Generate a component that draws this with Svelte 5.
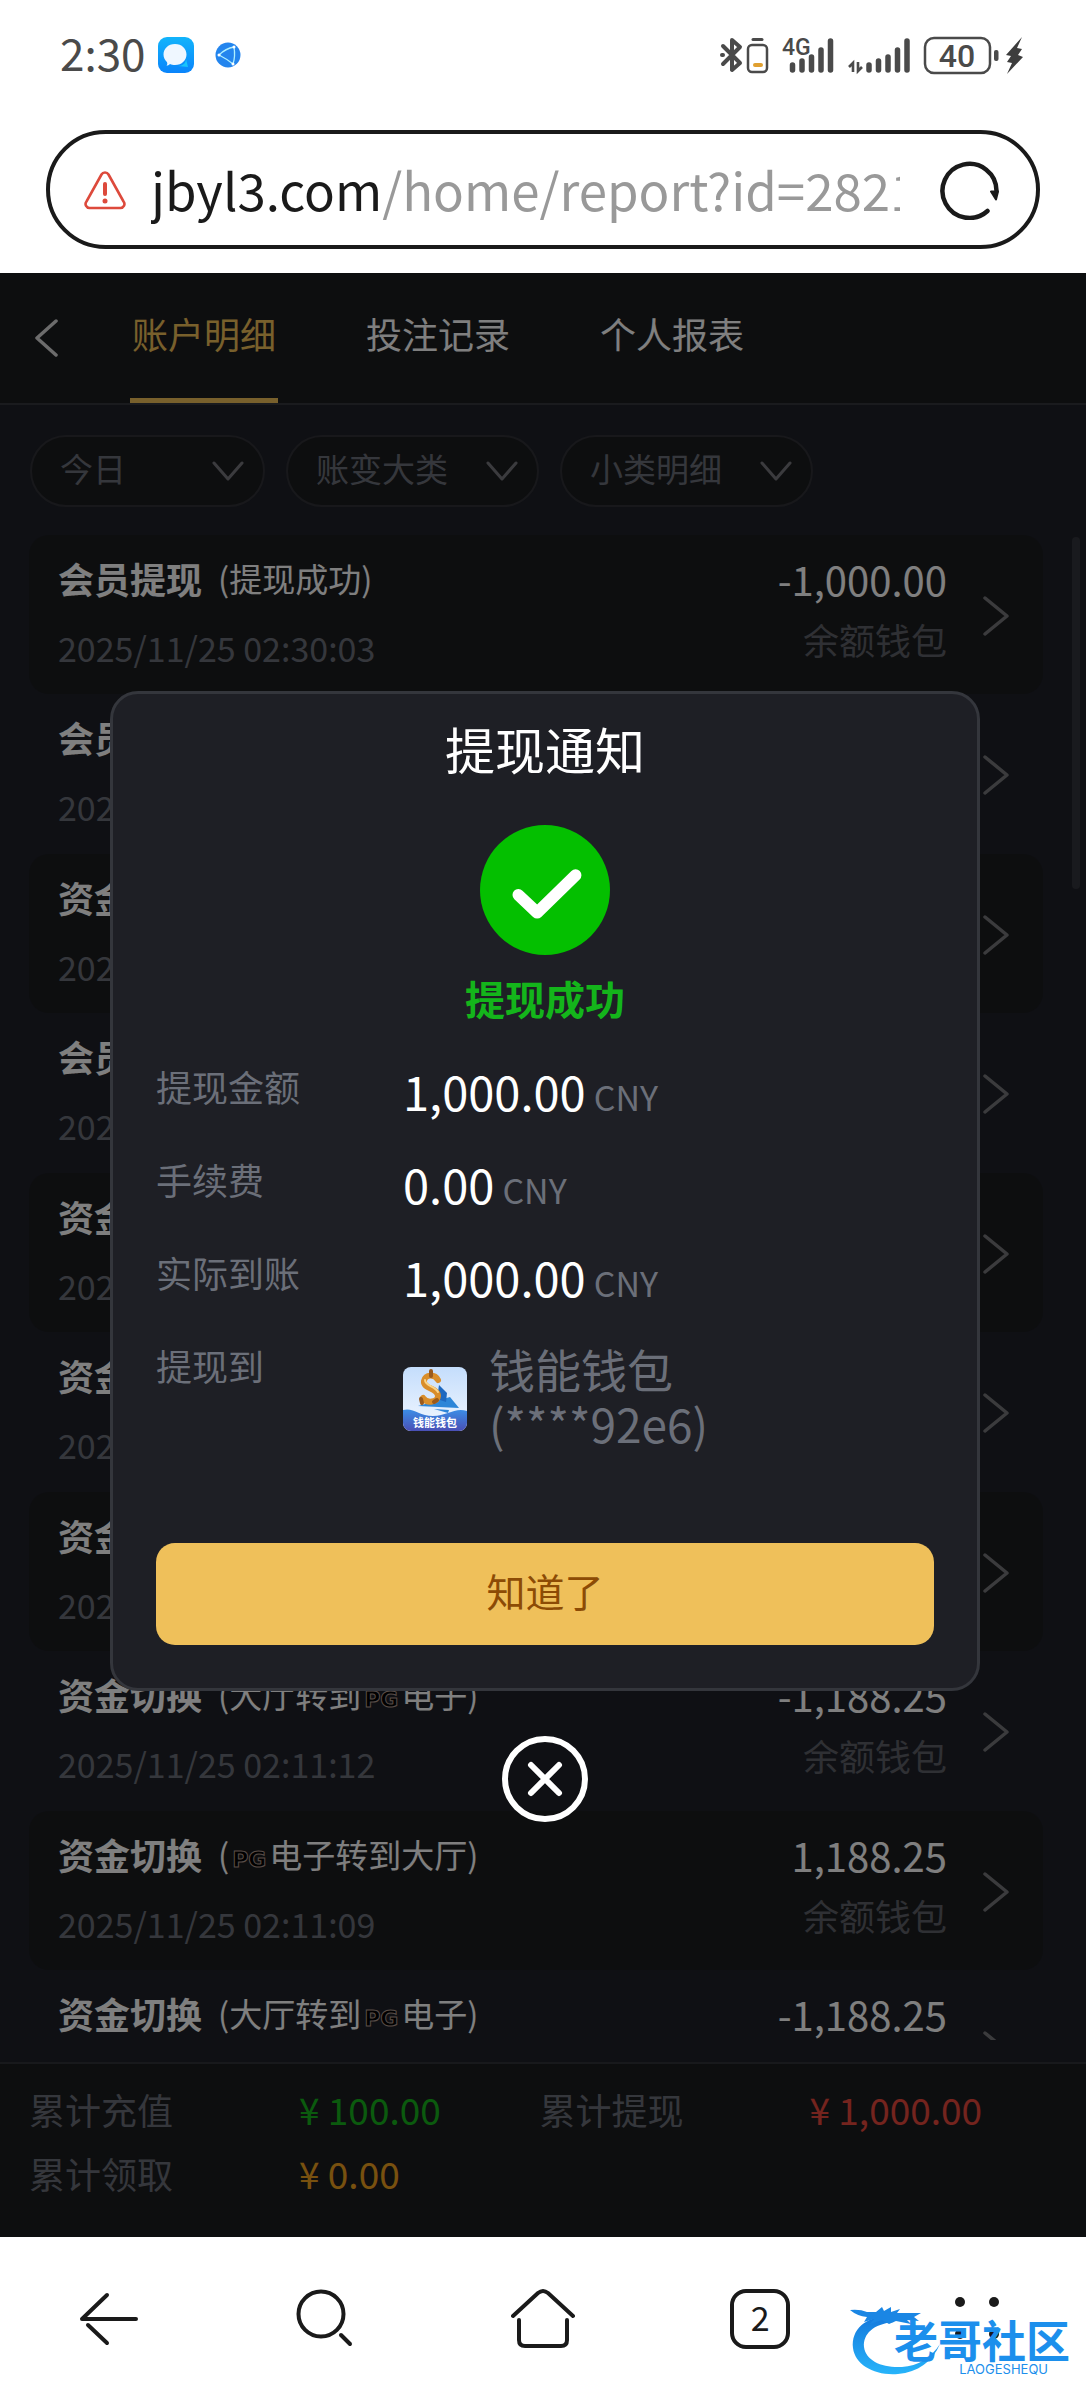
<script>
  const tabs = ['账户明细', '投注记录', '个人报表'];
  let activeTab = '账户明细';

  const filters = [
    { id: 'filter-date', label: '今日' },
    { id: 'filter-type', label: '账变大类' },
    { id: 'filter-sub', label: '小类明细' }
  ];

  // note parts: plain strings, 'PG' is drawn as the provider badge
  const toPg = ['(大厅转到', 'PG', '电子)'];
  const fromPg = ['(', 'PG', '电子转到大厅)'];

  const records = [
    { title: '会员提现', note: ['(提现成功)'], time: '2025/11/25 02:30:03', amount: '-1,000.00', wallet: '余额钱包' },
    { title: '会员提现', time: '2025/11/25' },
    { title: '资金切换', time: '2025/11/25' },
    { title: '会员提现', time: '2025/11/25' },
    { title: '资金切换', time: '2025/11/25' },
    { title: '资金切换', time: '2025/11/25' },
    { title: '资金切换', time: '2025/11/25' },
    { title: '资金切换', note: toPg, time: '2025/11/25 02:11:12', amount: '-1,188.25', wallet: '余额钱包' },
    { title: '资金切换', note: fromPg, time: '2025/11/25 02:11:09', amount: '1,188.25', wallet: '余额钱包' },
    { title: '资金切换', note: toPg, time: '2025/11/25', amount: '-1,188.25', wallet: '余额钱包' }
  ];

  const totals = [
    { label: '累计充值', value: '¥ 100.00', tone: 'green' },
    { label: '累计提现', value: '¥ 1,000.00', tone: 'red' },
    { label: '累计领取', value: '¥ 0.00', tone: 'gold' }
  ];

  const details = [
    { label: '提现金额', value: '1,000.00' },
    { label: '手续费', value: '0.00' },
    { label: '实际到账', value: '1,000.00' }
  ];

  let showNotice = true;

  function closeNotice() {
    showNotice = false;
  }
</script>

<div class="phone">
  <div class="status-bar">
    <div class="status-left">
      <span class="clock">2:30</span>
      <svg class="app-icon" width="36" height="36" viewBox="0 0 36 36">
        <defs>
          <linearGradient id="msg-bg" x1="0" y1="0" x2="0" y2="1">
            <stop offset="0" stop-color="#12b4fb" />
            <stop offset="1" stop-color="#0a84fb" />
          </linearGradient>
        </defs>
        <rect width="36" height="36" rx="9" fill="url(#msg-bg)" />
        <path d="M20 29c5 0 8-3 8-7l2 8z" fill="#19c5fb" />
        <path d="M17 7c7 0 11.500 5 11.500 10.500S24 28 17 28c-2 0-3.500-.3-5-1-.6.900-1.500 1.500-3.500 1.600 1-1.200 1-2.400.4-3.600C7 23 5.500 20.500 5.500 17.500 5.500 12 10 7 17 7z" fill="#eff7ff" />
      </svg>
      <svg class="globe" width="26" height="26" viewBox="0 0 26 26">
        <circle cx="13" cy="13" r="12.500" fill="#2385ee" />
        <path d="M4 13C8 9 13 6 19 5M4 13c4 2 9 5 14 9M19 5c1 6 1 11-1 17" fill="none" stroke="#aef0ff" stroke-width="1.300" />
        <circle cx="4" cy="13" r="1.500" fill="#fff" />
        <circle cx="19" cy="5" r="1.500" fill="#fff" />
        <circle cx="18" cy="22" r="1.500" fill="#fff" />
      </svg>
    </div>
    <svg class="status-right" width="304" height="56" viewBox="720 26 304 56">
      <g fill="none" stroke="#4a4a4a" stroke-width="4" stroke-linejoin="round" stroke-linecap="round">
        <path d="M723 45l17 17-8 7V39l8 7-17 17" />
        <path d="M722 54h1" />
        <rect x="748" y="44" width="19" height="27" rx="4" stroke-width="2.500" />
        <path d="M753 38.500h9" stroke-width="3" />
        <path d="M755 64h6" stroke="#e0a030" />
      </g>
      <text x="782" y="54" class="net-label">4G</text>
      <g stroke="#4a4a4a" stroke-width="5.500" stroke-linecap="round">
        <path d="M792.500 64v5M802 60v9M811.500 56v13M821 49v20M830.500 40v29" />
        <path d="M869 64v5M878.500 60v9M888 56v13M897.500 49v20M907 40v29" />
      </g>
      <path d="M853 71V62l-4 4M858 61v9l4-4" fill="none" stroke="#4a4a4a" stroke-width="2.600" />
      <rect x="925" y="37" width="65" height="35" rx="9" fill="none" stroke="#4a4a4a" stroke-width="2.500" />
      <text x="957" y="66" text-anchor="middle" class="battery-label">40</text>
      <rect x="994" y="49" width="4.500" height="11" rx="2" fill="#4a4a4a" />
      <path d="M1022 36l-16 18 5 1-4 6 5 1-5 11 16-17-5-2 4-6-5-1z" fill="#3d3d3d" />
    </svg>
  </div>

  <div class="address-row">
    <div class="address-bar">
      <svg class="warn" width="42" height="40" viewBox="0 0 42 40" fill="none" stroke="#dd4a3c">
        <path d="M17.500 4.500a4 4 0 0 1 7 0l15 27a4 4 0 0 1-3.500 6.500H6a4 4 0 0 1-3.500-6.500z" stroke-width="2.600" />
        <path d="M21 14v10" stroke-width="4" stroke-linecap="round" />
        <circle cx="21" cy="31" r="2.500" fill="#dd4a3c" stroke="none" />
      </svg>
      <div class="url">jbyl3.com<span>/home/report?id=2821</span></div>
      <button class="plain reload" aria-label="刷新">
        <svg width="60" height="60" viewBox="0 0 60 60" fill="none" stroke="#1a1a1a" stroke-width="4.500" stroke-linecap="round">
          <path d="M47.500 51A27 27 0 1 1 56.500 31" />
          <path d="M51 31.500h7l-2 8z" fill="#1a1a1a" stroke-width="2" stroke-linejoin="round" />
        </svg>
      </button>
    </div>
  </div>

  <main class="page">
    <header class="page-header">
      <button class="plain back" aria-label="返回">
        <svg width="24" height="38" viewBox="0 0 24 38" fill="none" stroke="#d8d8d8" stroke-width="3.500" stroke-linecap="round" stroke-linejoin="round">
          <path d="M21 2L2 19l19 17" />
        </svg>
      </button>
      <nav class="tabs">
        {#each tabs as tab}
          <button class="plain tab" class:active={tab === activeTab} on:click={() => (activeTab = tab)}>{tab}</button>
        {/each}
      </nav>
    </header>

    <div class="filters">
      {#each filters as filter, i}
        <div class="filter" class:short={i === 0}>
          <select id={filter.id} aria-label={filter.label}>
            <option>{filter.label}</option>
          </select>
          <svg width="32" height="22" viewBox="0 0 32 22" fill="none" stroke="#76777d" stroke-width="3" stroke-linecap="round" stroke-linejoin="round">
            <path d="M2 3l14 16L30 3" />
          </svg>
        </div>
      {/each}
    </div>

    <div class="list-area">
      <ul class="records">
        {#each records as record}
          <li class="record">
            <div class="record-main">
              <div class="record-title">
                <strong>{record.title}</strong>
                {#if record.note}
                  <span class="note">{#each record.note as part}{#if part === 'PG'}<b class="pg">PG</b>{:else}{part}{/if}{/each}</span>
                {/if}
              </div>
              <div class="time">{record.time}</div>
            </div>
            {#if record.amount}
              <div class="record-side">
                <div class="amount">{record.amount}</div>
                <div class="wallet">{record.wallet}</div>
              </div>
            {/if}
            <svg class="arrow" width="26" height="40" viewBox="0 0 26 40" fill="none" stroke="#76777a" stroke-width="3.500" stroke-linecap="round" stroke-linejoin="round">
              <path d="M2 2l22 18L2 38" />
            </svg>
          </li>
        {/each}
      </ul>
      <div class="scroll-thumb"></div>
    </div>

    <footer class="totals">
      {#each totals as total}
        <div class="total">
          <span class="total-label">{total.label}</span>
          <span class="total-value {total.tone}">{total.value}</span>
        </div>
      {/each}
    </footer>

    {#if showNotice}
      <div class="overlay">
        <div class="dialog" role="dialog" aria-labelledby="notice-title">
          <h2 id="notice-title">提现通知</h2>
          <svg class="check" width="130" height="130" viewBox="0 0 132 132">
            <circle cx="66" cy="66" r="66" fill="#04bf00" />
            <path d="M39 71l19 18 39-38" fill="none" stroke="#fff" stroke-width="12" stroke-linecap="round" stroke-linejoin="round" />
          </svg>
          <p class="result">提现成功</p>

          <dl class="details">
            {#each details as row}
              <dt>{row.label}</dt>
              <dd><span class="money">{row.value}</span> <span class="unit">CNY</span></dd>
            {/each}
            <dt>提现到</dt>
            <dd class="target">
              <svg width="64" height="64" viewBox="0 0 64 64">
                <defs>
                  <linearGradient id="wallet-bg" x1="0" y1="0" x2="0" y2="1">
                    <stop offset="0" stop-color="#c4ddfc" />
                    <stop offset="1" stop-color="#f3f8ff" />
                  </linearGradient>
                  <linearGradient id="wallet-wave" x1="0" y1="0" x2="0" y2="1">
                    <stop offset="0" stop-color="#3b8ee6" />
                    <stop offset="1" stop-color="#4a4fb5" />
                  </linearGradient>
                  <clipPath id="wallet-clip"><rect width="64" height="64" rx="8" /></clipPath>
                </defs>
                <g clip-path="url(#wallet-clip)">
                  <rect width="64" height="64" fill="url(#wallet-bg)" />
                  <path d="M15 39l32-9 9 11z" fill="#2d86d8" />
                  <path d="M36 18l8 8-1 9-9-3z" fill="#1f69c0" />
                  <path d="M31 42l15 1-1 3z" fill="#2d86d8" />
                  <path d="M35 13c-3-6-13-6-14 1-1 8 14 7 14 15 0 6-11 8-15 2" fill="none" stroke="#d98e2b" stroke-width="6" stroke-linecap="round" />
                  <path d="M28 4v5M19 36l-1-4M31 35l3-2" fill="none" stroke="#9a5a1c" stroke-width="4" stroke-linecap="round" />
                  <path d="M22 13c0 6 10 6 13 12" fill="none" stroke="#f9d48a" stroke-width="2" stroke-linecap="round" />
                  <path d="M0 43c10-3 16 6 30 6s22-9 34-5v20H0z" fill="url(#wallet-wave)" />
                  <text x="32" y="60" text-anchor="middle" class="wallet-label">钱能钱包</text>
                </g>
              </svg>
              <span>钱能钱包<br />(****92e6)</span>
            </dd>
          </dl>

          <button class="confirm" on:click={closeNotice}>知道了</button>
        </div>
        <button class="plain close" aria-label="关闭" on:click={closeNotice}>
          <svg width="88" height="88" viewBox="0 0 88 88" fill="none" stroke="#fff" stroke-width="6" stroke-linecap="round">
            <circle cx="44" cy="44" r="40" />
            <path d="M30 30l28 28M58 30L30 58" />
          </svg>
        </button>
      </div>
    {/if}
  </main>

  <nav class="browser-nav">
    <button class="plain" aria-label="后退">
      <svg width="64" height="64" viewBox="0 0 64 64" fill="none" stroke="#1a1a1a" stroke-width="4" stroke-linecap="round" stroke-linejoin="round">
        <path d="M59 32H5L30 8M11 38l19 18" />
      </svg>
    </button>
    <button class="plain" aria-label="搜索">
      <svg width="64" height="64" viewBox="0 0 64 64" fill="none" stroke="#1a1a1a" stroke-width="4" stroke-linecap="round">
        <circle cx="27" cy="27" r="22.500" />
        <path d="M47 48l9 9" />
      </svg>
    </button>
    <button class="plain" aria-label="主页">
      <svg width="64" height="64" viewBox="0 0 64 64" fill="none" stroke="#1a1a1a" stroke-width="4" stroke-linecap="round" stroke-linejoin="round">
        <path d="M2 29L27 6q5-4 10 0l25 23M8 33v20q0 6 6 6h36q6 0 6-6V33" />
      </svg>
    </button>
    <button class="plain tab-count" aria-label="标签页">2</button>
    <button class="plain" aria-label="菜单">
      <svg width="64" height="64" viewBox="0 0 64 64" fill="#1a1a1a">
        <circle cx="15" cy="15" r="5" />
        <circle cx="49" cy="15" r="5" />
        <circle cx="15" cy="47" r="5" />
        <circle cx="49" cy="47" r="5" />
      </svg>
    </button>

    <div class="watermark">
      <svg width="92" height="70" viewBox="0 0 92 70">
        <defs>
          <linearGradient id="brand-ring" x1="0" y1="0" x2="0" y2="1">
            <stop offset="0" stop-color="#1478dc" />
            <stop offset="1" stop-color="#27b4fa" />
          </linearGradient>
        </defs>
        <path d="M40 10C15 10 1 24 3 42c2 17 22 28 45 26 20-2 34-12 42-30-9 14-22 22-38 23-20 1-36-6-38-20-1-13 9-23 30-25z" fill="url(#brand-ring)" />
        <path d="M0 4q10-1 17 2l9 0 6-5 2 4 7-4 0 5 9-3-3 4 24 0-7 4 5 4-12-1 4 4-15-3-7 3-7-4-12 4 4-5-10 3 3-5q-10-1-17-7z" fill="#1a86e4" />
      </svg>
      <div class="brand">
        <span>老哥社区</span>
        <small>LAOGESHEQU</small>
      </div>
    </div>
  </nav>
</div>

<style>
  :global(body) {
    margin: 0;
    background: #fff;
  }

  .phone {
    height: 100vh;
    display: flex;
    flex-direction: column;
    overflow: hidden;
    background: #fff;
    color: #fff;
    font-family: 'Noto Sans CJK SC', 'Noto Sans', sans-serif;
    font-size: 36px;
    line-height: 48px;
  }

  .plain {
    padding: 0;
    border: 0;
    background: none;
    color: inherit;
    font: inherit;
  }

  svg {
    display: block;
    flex: none;
  }

  /* phone status bar */
  .status-bar {
    height: 110px;
    display: flex;
    align-items: center;
    justify-content: space-between;
    padding: 0 62px 0 60px;
  }

  .status-left {
    display: flex;
    align-items: center;
  }

  .clock {
    padding-bottom: 6px;
    font-size: 44px;
    color: #4a4a4a;
  }

  .app-icon {
    margin-left: 12px;
  }

  .globe {
    margin-left: 21px;
  }

  .net-label {
    font-family: Roboto, sans-serif;
    font-size: 23px;
    font-weight: 500;
    fill: #4a4a4a;
  }

  .battery-label {
    font-family: Roboto, sans-serif;
    font-size: 32px;
    font-weight: 500;
    fill: #4a4a4a;
  }

  /* address bar */
  .address-row {
    height: 163px;
    padding: 20px 46px 0;
    box-sizing: border-box;
  }

  .address-bar {
    height: 119px;
    display: flex;
    align-items: center;
    padding: 0 36px 0 34px;
    box-sizing: border-box;
    border: 4px solid #1a1a1a;
    border-radius: 60px;
  }

  .url {
    flex: 1;
    min-width: 0;
    margin: 0 40px 0 25px;
    padding-bottom: 2px;
    overflow: hidden;
    white-space: nowrap;
    font-size: 51px;
    line-height: 76px;
    color: #1a1a1a;
  }

  .url span {
    color: #999;
  }

  /* account page */
  .page {
    position: relative;
    flex: 1;
    min-height: 0;
    display: flex;
    flex-direction: column;
    background: #1e2028;
  }

  .page-header {
    height: 132px;
    display: flex;
    box-sizing: border-box;
    padding-left: 35px;
    background: #1b1c1f;
    border-bottom: 2px solid #34363d;
  }

  .back {
    width: 95px;
    height: 130px;
  }

  .tabs {
    display: flex;
    gap: 86px;
  }

  .tab {
    padding: 0 2px 6px;
    border-bottom: 5px solid transparent;
  }

  .tab.active {
    color: #f0c059;
    border-bottom-color: #f0c059;
  }

  .filters {
    display: flex;
    gap: 21px;
    padding: 30px 30px 28px;
  }

  .filter {
    width: 253px;
    display: grid;
    align-items: center;
  }

  .filter.short {
    width: 235px;
  }

  .filter select {
    grid-area: 1 / 1;
    height: 72px;
    padding: 0 60px 6px 28px;
    appearance: none;
    border: 2px solid #303137;
    border-radius: 36px;
    background: #1b1c1f;
    color: #6b6f79;
    font-family: inherit;
    font-size: 33px;
  }

  .filter svg {
    grid-area: 1 / 1;
    justify-self: end;
    margin-right: 21px;
    pointer-events: none;
  }

  .list-area {
    flex: 1;
    min-height: 0;
    display: flex;
    justify-content: space-between;
    margin-bottom: 22px;
    overflow: hidden;
  }

  .records {
    flex: 1;
    margin: 0 29px;
    padding: 0;
    list-style: none;
  }

  .record {
    height: 160px;
    display: flex;
    align-items: center;
    box-sizing: border-box;
    padding: 2px 34px 0 29px;
    border-radius: 20px;
  }

  .record:nth-child(odd) {
    height: 159px;
    background: #1b1c1f;
  }

  .record-main {
    flex: 1;
    padding-bottom: 6px;
  }

  .record-title {
    display: flex;
    align-items: center;
    gap: 16px;
    margin-bottom: 22px;
  }

  .note {
    display: flex;
    align-items: center;
    font-size: 33px;
  }

  /* provider badge inside the record note */
  .pg {
    margin: 12px 3px 0;
    font-family: 'DejaVu Sans', sans-serif;
    font-size: 22px;
    line-height: 24px;
    color: #000;
    -webkit-text-stroke: 1px #b09a90;
  }

  .time {
    font-size: 34px;
    color: #6b6f79;
  }

  .record-side {
    margin-right: 36px;
    padding-bottom: 14px;
    text-align: right;
  }

  .amount {
    margin-bottom: 12px;
    font-size: 40px;
  }

  .wallet {
    color: #5f6168;
  }

  .scroll-thumb {
    width: 8px;
    height: 352px;
    margin: 2px 6px 0 0;
    border-radius: 4px;
    background: #33353c;
  }

  .totals {
    height: 175px;
    display: grid;
    grid-template-columns: 1fr 1fr;
    grid-auto-rows: 64px;
    box-sizing: border-box;
    padding: 13px 36px 0 29px;
    background: #1b1c1f;
    border-top: 2px solid #303238;
  }

  .total {
    display: grid;
    grid-template-columns: 270px 1fr;
    align-items: center;
  }

  .total-label {
    color: #6b6f79;
  }

  .total-value {
    font-size: 37px;
  }

  .green {
    color: #16b51c;
  }

  .red {
    color: #e8483c;
  }

  .gold {
    color: #f0a21e;
  }

  /* withdrawal notice */
  .overlay {
    position: absolute;
    inset: 0;
    display: flex;
    flex-direction: column;
    align-items: center;
    justify-content: center;
    gap: 44px;
    padding: 4px 106px 0 110px;
    background: rgba(0, 0, 0, 0.5);
  }

  .dialog {
    width: 100%;
    display: flex;
    flex-direction: column;
    align-items: center;
    box-sizing: border-box;
    padding: 18px 43px 43px;
    border: 3px solid #34363c;
    border-radius: 28px;
    background: #1e1f25;
  }

  .dialog h2 {
    margin: 0;
    font-size: 50px;
    font-weight: normal;
    line-height: 72px;
  }

  .check {
    margin-top: 41px;
  }

  .result {
    margin: 15px 0 0;
    font-size: 40px;
    font-weight: bold;
    line-height: 56px;
    color: #14b51b;
  }

  .details {
    align-self: stretch;
    display: grid;
    grid-template-columns: 247px 1fr;
    grid-auto-rows: minmax(93px, auto);
    margin: 36px 0 0;
    color: #6b6f79;
  }

  .details dd {
    margin: 0;
    line-height: 58px;
  }

  .money {
    font-size: 47px;
    color: #fff;
  }

  .unit {
    font-size: 34px;
  }

  .details .target {
    display: flex;
    align-items: center;
    gap: 22px;
    font-size: 46px;
    line-height: 55px;
  }

  .target span {
    padding-bottom: 6px;
  }

  .wallet-label {
    font-size: 11px;
    font-weight: bold;
    fill: #fff;
  }

  .confirm {
    align-self: stretch;
    height: 102px;
    margin-top: 86px;
    padding: 0 0 8px;
    border: 0;
    border-radius: 19px;
    background: #efc05a;
    color: #8c4b05;
    font-family: inherit;
    font-size: 39px;
  }

  /* browser toolbar */
  .browser-nav {
    position: relative;
    height: 163px;
    display: grid;
    grid-template-columns: repeat(5, 1fr);
    align-items: center;
    justify-items: center;
    color: #1a1a1a;
  }

  .browser-nav .tab-count {
    width: 60px;
    height: 60px;
    padding-bottom: 4px;
    border: 4px solid #1a1a1a;
    border-radius: 16px;
    font-size: 34px;
  }

  .watermark {
    position: absolute;
    right: 16px;
    bottom: 24px;
    display: flex;
    align-items: flex-end;
  }

  .brand {
    display: flex;
    flex-direction: column;
    align-items: flex-end;
    margin-left: -48px;
    color: #1c8fec;
  }

  .brand span {
    font-size: 44px;
    font-weight: bold;
    line-height: 46px;
  }

  .brand small {
    padding-right: 22px;
    font-family: Inter, sans-serif;
    font-size: 13px;
    line-height: 14px;
  }
</style>
